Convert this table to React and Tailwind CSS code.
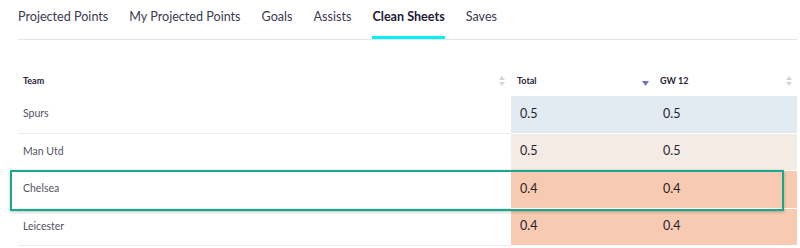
const tabs = ['Projected Points', 'My Projected Points', 'Goals', 'Assists', 'Clean Sheets', 'Saves'];

const rows = [
  { team: 'Spurs', total: '0.5', gw: '0.5', bg: 'bg-[#e2ebf1]' },
  { team: 'Man Utd', total: '0.5', gw: '0.5', bg: 'bg-[#f5ebe5]' },
  { team: 'Chelsea', total: '0.4', gw: '0.4', bg: 'bg-[#f8cab2]', highlight: true },
  { team: 'Leicester', total: '0.4', gw: '0.4', bg: 'bg-[#f8cab2]' },
];

function SortArrows() {
  return (
    <svg width="6" height="10" viewBox="0 0 6 10" className="shrink-0">
      <path d="M3 0 L6 4 L0 4 Z" fill="#d4d4d8" />
      <path d="M3 10 L6 6 L0 6 Z" fill="#d4d4d8" />
    </svg>
  );
}

function SortDown() {
  return (
    <svg width="7" height="5" viewBox="0 0 7 5" className="shrink-0 mt-[5px]">
      <path d="M0 0 L7 0 L3.5 5 Z" fill="#6f73d2" />
    </svg>
  );
}

export default function App() {
  return (
    <div className="w-[800px] h-[248px] bg-white overflow-hidden font-['Lato',sans-serif]">
      <div className="ml-[18px] w-[779px]">
        <nav className="flex gap-[21px] border-b border-[#e5e5e8] h-[40px]">
          {tabs.map(t => (
            <div key={t} className="flex flex-col h-[39px]">
              <span
                className={`pt-[8px] text-[12.6px] leading-[18px] ${
                  t === 'Clean Sheets' ? 'font-bold text-[#241a38]' : 'text-[#3d3950]'
                }`}
              >
                {t}
              </span>
              {t === 'Clean Sheets' && <span className="mt-auto h-[3px] bg-[#05f0f2]" />}
            </div>
          ))}
        </nav>

        <div className="mt-[20px]">
          <div className="flex h-[36px] pt-[6px] items-center text-[9px] font-bold text-[#2a2438]">
            <div className="w-[493px] flex items-center justify-between pl-[5px] pr-[6px]">
              <span>Team</span>
              <SortArrows />
            </div>
            <div className="w-[143px] flex items-center justify-between pl-[6px] pr-[5px]">
              <span>Total</span>
              <SortDown />
            </div>
            <div className="w-[143px] flex items-center justify-between pl-[6px] pr-[5px]">
              <span>GW 12</span>
              <SortArrows />
            </div>
          </div>

          {rows.map(r => (
            <div key={r.team} className={`relative flex h-[37.5px] ${r.highlight ? 'z-10' : ''}`}>
              <div className="w-[493px] flex items-center pl-[5px] text-[10.5px] text-[#55525f] border-b border-[#ececee]">
                {r.team}
              </div>
              <div className={`w-[143px] flex items-center pl-[9px] text-[12.5px] text-[#241f30] border-b border-white ${r.bg}`}>
                {r.total}
              </div>
              <div className={`w-[143px] flex items-center pl-[9px] text-[12.5px] text-[#241f30] border-b border-white ${r.bg}`}>
                {r.gw}
              </div>
              {r.highlight && (
                <div className="absolute left-[-8px] right-[13px] top-[-1px] bottom-[-2px] border-2 border-[#17a98b] shadow-[0_1px_3px_rgba(0,0,0,0.25)] pointer-events-none" />
              )}
            </div>
          ))}
        </div>
      </div>
    </div>
  );
}
